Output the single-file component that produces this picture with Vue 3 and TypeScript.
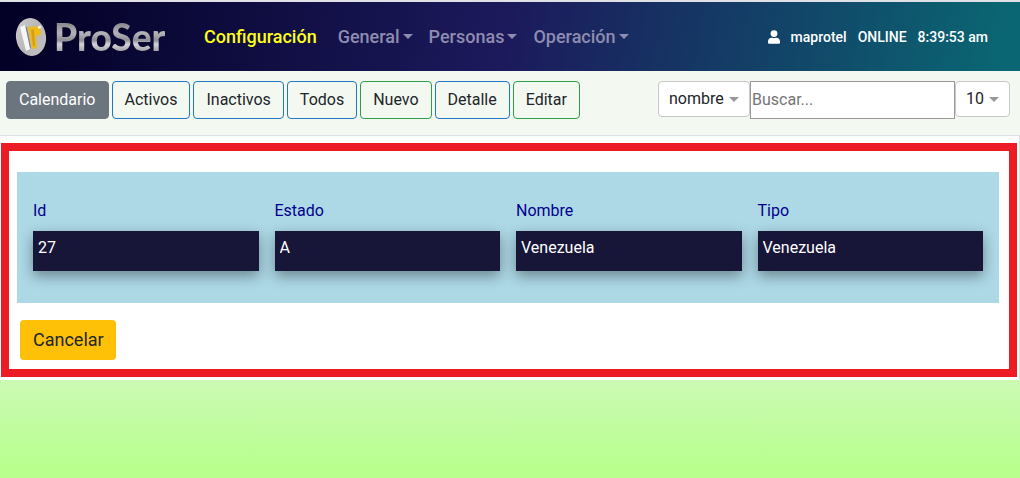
<script setup lang="ts">
import { ref } from 'vue'

interface Field {
  id: string
  label: string
  value: string
}

const menus: string[] = ['General', 'Personas', 'Operación']

const actions: { label: string; kind: string }[] = [
  { label: 'Calendario', kind: 'filled' },
  { label: 'Activos', kind: 'blue' },
  { label: 'Inactivos', kind: 'blue' },
  { label: 'Todos', kind: 'blue' },
  { label: 'Nuevo', kind: 'green' },
  { label: 'Detalle', kind: 'blue' },
  { label: 'Editar', kind: 'green' },
]

const fields = ref<Field[]>([
  { id: 'id', label: 'Id', value: '27' },
  { id: 'estado', label: 'Estado', value: 'A' },
  { id: 'nombre', label: 'Nombre', value: 'Venezuela' },
  { id: 'tipo', label: 'Tipo', value: 'Venezuela' },
])

const searchField = ref('nombre')
const pageSize = ref('10')
const query = ref('')
</script>

<template>
  <div class="page">
    <header class="topbar">
      <a class="brand" href="#" aria-label="ProSer">
        <svg class="emblem" viewBox="0 0 34 40" aria-hidden="true">
          <defs>
            <linearGradient id="disc" x1="0" y1="0" x2="1" y2="1">
              <stop offset="0" stop-color="#cfcfcf" />
              <stop offset="0.5" stop-color="#b8b8ba" />
              <stop offset="1" stop-color="#c2c2c2" />
            </linearGradient>
          </defs>
          <ellipse cx="17" cy="20" rx="15" ry="19" fill="url(#disc)" transform="rotate(-8 17 20)" />
          <path d="M11 9L13 10L17 30L16 32Z" fill="#85858a" />
          <path d="M6 10L11 8L16 32L12 34Z" fill="#f6f6f6" />
          <path d="M14 10L23 9L24 12L27 11L27 18L22 19L23 31L18 32Z" fill="#ecbb1c" />
          <path d="M17 13L20 12L21 29L19 29Z" fill="#d79f17" />
          <path d="M24 9L27 9L27 11L24 12Z" fill="#f5f0d8" />
        </svg>
        <span class="wordmark">ProSer</span>
      </a>
      <nav class="menu">
        <a class="link current" href="#">Configuración</a>
        <a v-for="m in menus" :key="m" class="link" href="#">{{ m }}<i class="caret"></i></a>
      </nav>
      <div class="session">
        <svg class="user" viewBox="0 0 448 512" aria-hidden="true">
          <path
            fill="#fff"
            d="M224 256a128 128 0 1 0 0-256 128 128 0 0 0 0 256zm90 32h-17a174 174 0 0 1-146 0h-17C60 288 0 348 0 422v42c0 27 21 48 48 48h352c27 0 48-21 48-48v-42c0-74-60-134-134-134z"
          />
        </svg>
        <span>maprotel</span>
        <span>ONLINE</span>
        <span>8:39:53 am</span>
      </div>
    </header>

    <div class="toolbar">
      <div class="actions">
        <button v-for="a in actions" :key="a.label" type="button" class="btn" :class="a.kind">
          {{ a.label }}
        </button>
      </div>
      <form class="search" @submit.prevent>
        <div class="picker">
          <select v-model="searchField" aria-label="Campo">
            <option>nombre</option>
          </select>
          <i class="arrow"></i>
        </div>
        <input v-model="query" class="query" type="text" placeholder="Buscar..." aria-label="Buscar" />
        <div class="picker">
          <select v-model="pageSize" aria-label="Filas">
            <option>10</option>
          </select>
          <i class="arrow"></i>
        </div>
      </form>
    </div>

    <main class="card">
      <section class="frame">
        <div class="fields">
          <div v-for="f in fields" :key="f.id" class="field">
            <label :for="f.id">{{ f.label }}</label>
            <input :id="f.id" v-model="f.value" type="text" readonly />
          </div>
        </div>
        <button type="button" class="cancel">Cancelar</button>
      </section>
    </main>
  </div>
</template>

<style>
body {
  margin: 0;
}
</style>

<style scoped>
.page,
.page * {
  box-sizing: border-box;
}

.page {
  min-height: 100vh;
  font: 400 16px/24px Roboto, 'Liberation Sans', sans-serif;
  color: #212529;
  background: linear-gradient(180deg, #f3f9f1 0, #f3f9f1 15%, #cbfab3 80%, #b8ff8e 98%);
}

button,
select,
input {
  font: inherit;
  color: inherit;
  margin: 0;
}

.topbar {
  display: flex;
  align-items: center;
  height: 71px;
  padding: 0 32px 0 14px;
  border-top: 2px solid #dfe1e6;
  background: linear-gradient(100deg, #020024 0%, #1c1a5c 50%, #0a6672 98%);
}

.brand {
  display: flex;
  align-items: center;
  gap: 6px;
  width: 190px;
  text-decoration: none;
}

.emblem {
  width: 34px;
  height: 40px;
}

.wordmark {
  font: 900 37px/40px Lato, Roboto, sans-serif;
  color: transparent;
  background: linear-gradient(180deg, #8c8c92 18%, #b4b4b8 40%, #8e8e95 58%, #d4d4d8 68%, #a2a2a8 85%);
  background-clip: text;
  -webkit-background-clip: text;
}

.menu {
  display: flex;
  gap: 16px;
  font-size: 18px;
  font-weight: 500;
}

.link {
  color: #8e8cb0;
  text-decoration: none;
}

.current {
  margin-right: 5px;
  color: #ffff1a;
}

.caret {
  display: inline-block;
  margin-left: 3px;
  vertical-align: 4px;
  border: 5px solid transparent;
  border-top-color: currentColor;
  border-bottom: 0;
}

.session {
  display: flex;
  align-items: center;
  gap: 11px;
  margin-left: auto;
  font-size: 14px;
  font-weight: 500;
  color: #fff;
}

.user {
  width: 12px;
  height: 14px;
}

.toolbar {
  display: flex;
  justify-content: space-between;
  align-items: flex-start;
  height: 65px;
  padding: 10px 10px 0 6px;
  background: #f3f8f1;
  border-bottom: 1px solid #dce3e6;
}

.actions {
  display: flex;
  gap: 3px;
}

.btn {
  height: 38px;
  padding: 0 12px;
  border: 1px solid #1f77c4;
  border-radius: 4px;
  background: transparent;
}

.filled {
  color: #fff;
  border-color: #6c757d;
  background: #6c757d;
}

.green {
  border-color: #2f9e48;
}

.search {
  display: flex;
  align-items: flex-start;
}

.picker {
  position: relative;
}

.picker select {
  display: block;
  height: 36px;
  padding: 0 25px 0 10px;
  border: 1px solid #c8c8c8;
  border-radius: 4px;
  background: #fff;
  appearance: none;
}

.arrow {
  position: absolute;
  right: 11px;
  top: 16px;
  border: 5px solid transparent;
  border-top-color: #999;
  border-bottom: 0;
  pointer-events: none;
}

.query {
  width: 205px;
  height: 38px;
  padding: 0 1px 2px;
  border: 1px solid #9a9a9a;
  background: #fff;
}

.query::placeholder {
  color: #757575;
}

.card {
  padding: 7px 2px 3px 1px;
  border-right: 1px solid #dfdfdf;
  background: #fff;
}

.frame {
  padding: 21px 10px 9px 8px;
  border: 8px solid #ed1c24;
}

.fields {
  display: grid;
  grid-template-columns: repeat(4, 1fr);
  gap: 16px;
  padding: 27px 16px 32px;
  background: #add8e6;
}

.field {
  display: flex;
  flex-direction: column;
  gap: 8px;
}

.field label {
  color: #00008b;
}

.field input {
  width: 100%;
  height: 40px;
  padding: 0 5px 8px;
  border: 0;
  border-radius: 0;
  color: #fff;
  background: #171538;
  box-shadow: 0 5px 14px rgba(0, 0, 0, 0.38);
}

.cancel {
  display: block;
  height: 40px;
  margin: 17px 0 0 3px;
  padding: 0 12px 0 13px;
  border: 0;
  border-radius: 4px;
  font-size: 18px;
  background: #ffc107;
}
</style>
